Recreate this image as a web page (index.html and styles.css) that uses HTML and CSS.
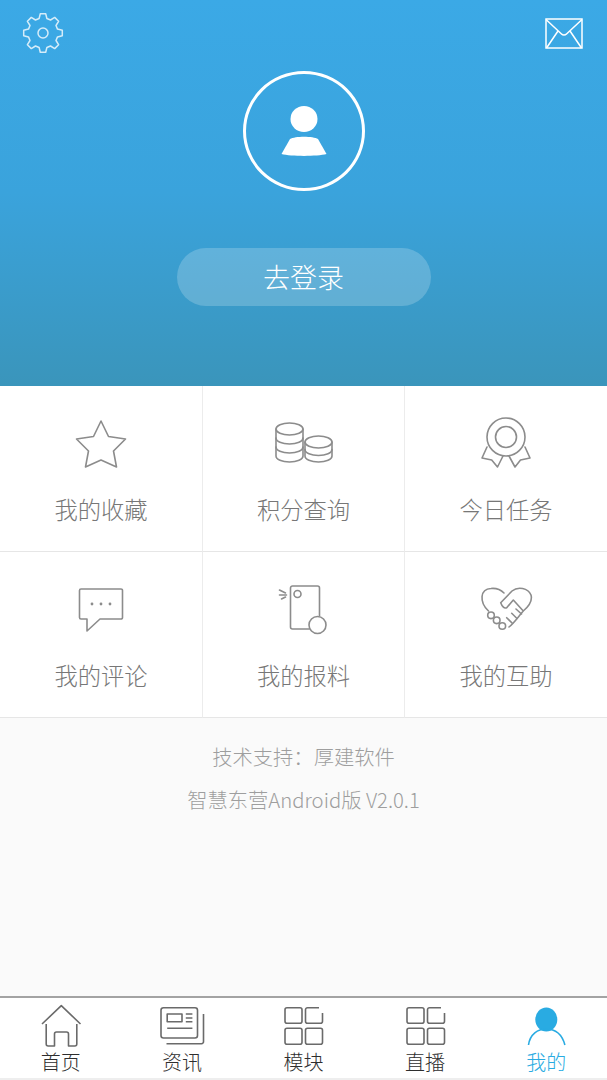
FILE: index.html
```html
<!DOCTYPE html>
<html lang="zh-CN">
<head>
  <meta charset="UTF-8">
  <meta name="viewport" content="width=device-width, initial-scale=1.0">
  <title>智慧东营</title>
  <link rel="stylesheet" href="styles.css">
</head>
<body>
  <div class="page">
    <header class="profile">
      <div class="top-bar">
        <svg class="icon-gear" viewBox="0 0 42 42">
          <g transform="translate(21 21)">
            <polygon points="-3.9,-14.5 -2.7,-19.3 2.7,-19.3 3.9,-14.5 7.5,-13 11.7,-15.6 15.6,-11.7 13,-7.5 14.5,-3.9 19.3,-2.7 19.3,2.7 14.5,3.9 13,7.5 15.6,11.7 11.7,15.6 7.5,13 3.9,14.5 2.7,19.3 -2.7,19.3 -3.9,14.5 -7.5,13 -11.7,15.6 -15.6,11.7 -13,7.5 -14.5,3.9 -19.3,2.7 -19.3,-2.7 -14.5,-3.9 -13,-7.5 -15.6,-11.7 -11.7,-15.6 -7.5,-13"/>
            <circle r="5"/>
          </g>
        </svg>
        <svg class="icon-mail" viewBox="0 0 38 31">
          <rect x="1" y="1" width="36" height="29"/>
          <path d="M1 1.500 16.500 16A3.500 3.500 0 0 0 21.500 16L37 1.500M1.500 30 13 13M36.500 30 25 13"/>
        </svg>
      </div>
      <div class="avatar">
        <svg class="icon-avatar" viewBox="0 0 46 50">
          <ellipse cx="23" cy="13" rx="13.500" ry="13"/>
          <path d="M9 33C14 30 32 30 37 33L45.500 48C36 50.500 10 50.500 .5 48Z"/>
        </svg>
      </div>
      <a class="login-btn">去登录</a>
    </header>

    <section class="menu">
      <div class="menu-cell">
        <svg class="menu-icon" viewBox="0 0 60 56">
          <path d="M30 5 37.500 20.500 54.500 23 42.500 35 45.500 51 30 44 14.500 51 17.500 35 5.500 23 22.500 20.500Z"/>
        </svg>
        <span class="menu-label">我的收藏</span>
      </div>
      <div class="menu-cell">
        <svg class="menu-icon" viewBox="0 0 60 56">
          <path d="M2 13V40C2 43.500 8 46 15.500 46S29 43.500 29 40V13"/>
          <path class="line" d="M2 22C2 25.500 8 28 15.500 28S29 25.500 29 22M2 31C2 34.500 8 37 15.500 37S29 34.500 29 31"/>
          <ellipse cx="15.500" cy="13" rx="13.500" ry="6"/>
          <path d="M31 26V40C31 43.500 37 46 44.500 46S58 43.500 58 40V26"/>
          <path class="line" d="M31 33.500C31 37 37 39.500 44.500 39.500S58 37 58 33.500"/>
          <ellipse cx="44.500" cy="26" rx="13.500" ry="6"/>
        </svg>
        <span class="menu-label">积分查询</span>
      </div>
      <div class="menu-cell">
        <svg class="menu-icon" viewBox="0 0 60 56">
          <path d="M11 31 6 42 15.700 44 21.500 51 27 40M33 40 39 51 44.500 44 54 42 49 31"/>
          <circle cx="30" cy="21" r="19"/>
          <circle cx="30" cy="21" r="10.500"/>
        </svg>
        <span class="menu-label">今日任务</span>
      </div>
      <div class="menu-cell">
        <svg class="menu-icon" viewBox="0 0 60 56">
          <path d="M10 7H50A1.500 1.500 0 0 1 51.500 8.500V35.500A1.500 1.500 0 0 1 50 37H29L16 49V37H10A1.500 1.500 0 0 1 8.500 35.500V8.500A1.500 1.500 0 0 1 10 7Z"/>
          <circle class="dot" cx="21" cy="22" r="1.400"/>
          <circle class="dot" cx="30" cy="22" r="1.400"/>
          <circle class="dot" cx="39" cy="22" r="1.400"/>
        </svg>
        <span class="menu-label">我的评论</span>
      </div>
      <div class="menu-cell">
        <svg class="menu-icon" viewBox="0 0 60 56">
          <path d="M45.500 34V6A2 2 0 0 0 43.500 4H18.500A2 2 0 0 0 16.500 6V45A2 2 0 0 0 18.500 47H35"/>
          <circle cx="43.500" cy="43" r="8.500"/>
          <circle cx="23.500" cy="12" r="3.500"/>
          <path d="M5.500 8 11.500 11M5.500 13H12.500M7.500 17 11.500 15"/>
        </svg>
        <span class="menu-label">我的报料</span>
      </div>
      <div class="menu-cell">
        <svg class="menu-icon" viewBox="0 0 60 56">
          <path class="line" d="M12.500 29C3 20 4 7 15 6.500 20 6 25 8 28 11"/>
          <path class="line" d="M47.300 29 37.300 18 30.700 25.700C28 27 26 24 24.700 20.700L36 9C42 4 52 6 55 13 57 20 52 25 47.300 29 42 35 38 41 33 45"/>
          <circle cx="15" cy="33.300" r="3.300"/>
          <circle cx="20.700" cy="38.300" r="3.300"/>
          <circle cx="26.300" cy="44" r="3.300"/>
          <path class="line" d="M30.700 35.700 36.300 41.300M35.700 31.300 41 36.500M40 27 45.500 32"/>
        </svg>
        <span class="menu-label">我的互助</span>
      </div>
    </section>

    <section class="about">
      <p>技术支持：厚建软件</p>
      <p>智慧东营Android版 V2.0.1</p>
    </section>

    <nav class="tabs">
      <a class="tab">
        <svg class="tab-icon" viewBox="0 0 44 44">
          <path d="M3 20 22.300 1.700 41.500 20M7.200 20V40A2 2 0 0 0 9.200 42H15.500V30A2 2 0 0 1 17.500 28H27.500A2 2 0 0 1 29.500 30V42H35.800A2 2 0 0 0 37.800 40V20"/>
        </svg>
        <span>首页</span>
      </a>
      <a class="tab">
        <svg class="tab-icon" viewBox="0 0 44 44">
          <rect x="1" y="3.700" width="36.500" height="30.300" rx="2.500"/>
          <path d="M43.500 10V37.500A2 2 0 0 1 41.500 39.700H6.500"/>
          <rect x="7.200" y="10" width="14.800" height="7.700"/>
          <path d="M25.800 10H32.400M25.800 14H32.400M25.800 17.700H32.400M7.200 24.300H32.400"/>
        </svg>
        <span>资讯</span>
      </a>
      <a class="tab">
        <svg class="tab-icon" viewBox="0 0 44 44">
          <rect x="4" y="3.700" width="17" height="15.600" rx="2"/>
          <path d="M38 3.700H26.500A2 2 0 0 0 24.500 5.700V17.300A2 2 0 0 0 26.500 19.300H39.500A2 2 0 0 0 41.500 17.300V9"/>
          <rect x="4" y="24.300" width="17" height="16" rx="2"/>
          <rect x="24.500" y="24.300" width="17" height="16" rx="2"/>
        </svg>
        <span>模块</span>
      </a>
      <a class="tab">
        <svg class="tab-icon" viewBox="0 0 44 44">
          <rect x="4" y="3.700" width="17" height="15.600" rx="2"/>
          <path d="M38 3.700H26.500A2 2 0 0 0 24.500 5.700V17.300A2 2 0 0 0 26.500 19.300H39.500A2 2 0 0 0 41.500 17.300V9"/>
          <rect x="4" y="24.300" width="17" height="16" rx="2"/>
          <rect x="24.500" y="24.300" width="17" height="16" rx="2"/>
        </svg>
        <span>直播</span>
      </a>
      <a class="tab active">
        <svg class="tab-icon" viewBox="0 0 44 44">
          <ellipse class="solid" cx="22.300" cy="15.500" rx="11" ry="12"/>
          <path d="M4.500 41C6 30 14 25 22 25 31 25 38 30 40.900 41"/>
        </svg>
        <span>我的</span>
      </a>
    </nav>
  </div>
</body>
</html>
```

FILE: styles.css
```css
* {
  box-sizing: border-box;
}
body {
  margin: 0;
  font-family: "Noto Sans CJK SC", "Liberation Sans", sans-serif;
  background-color: #fafafa;
}
.page {
  display: flex;
  flex-direction: column;
  height: 1080px;
  overflow: hidden;
}

/* blue header */
.profile {
  display: flex;
  flex-direction: column;
  align-items: center;
  height: 386px;
  padding-top: 12px;
  background: linear-gradient(#3ba9e6 0%, #3aa3dc 50%, #3a95bb 100%);
}
.top-bar {
  display: flex;
  justify-content: space-between;
  align-items: center;
  width: 100%;
  height: 42px;
  padding: 0 24px 0 22px;
}
.icon-gear {
  width: 42px;
  height: 42px;
  fill: none;
  stroke: #d5ecf9;
  stroke-width: 1.5;
  stroke-linejoin: round;
}
.icon-mail {
  width: 38px;
  height: 31px;
  fill: none;
  stroke: #fff;
  stroke-width: 1.5;
}
.avatar {
  display: flex;
  justify-content: center;
  align-items: center;
  width: 122px;
  height: 120px;
  margin-top: 17px;
  border: 3px solid #fff;
  border-radius: 50%;
}
.icon-avatar {
  width: 46px;
  height: 50px;
  fill: #fff;
}
.login-btn {
  width: 254px;
  height: 58px;
  margin-top: 57px;
  border-radius: 29px;
  background-color: rgba(255, 255, 255, 0.2);
  font-size: 27px;
  font-weight: 300;
  line-height: 57px;
  text-align: center;
  color: #fff;
}

/* 2x3 menu */
.menu {
  display: grid;
  grid-template-columns: 203px 202px 202px;
  background-color: #fff;
}
.menu-cell {
  display: flex;
  flex-direction: column;
  align-items: center;
  height: 166px;
  padding-top: 30px;
  border-right: 1px solid #ececec;
  border-bottom: 1px solid #e6e6e6;
}
.menu-cell:nth-child(3n) {
  border-right: none;
}
.menu-icon {
  width: 60px;
  height: 56px;
  fill: #fff;
  stroke: #8c8c8c;
  stroke-width: 1.6;
  stroke-linejoin: round;
  stroke-linecap: round;
}
.menu-icon .line {
  fill: none;
}
.menu-icon .dot {
  fill: #8c8c8c;
  stroke: none;
}
.menu-label {
  margin-top: 22px;
  font-size: 23.3px;
  font-weight: 300;
  line-height: 30px;
  color: #777;
}

/* version text */
.about {
  flex: 1;
  padding-top: 23px;
  text-align: center;
  font-size: 20.3px;
  font-weight: 300;
  line-height: 30px;
  color: #9e9e9e;
}
.about p {
  margin: 0 0 13px;
}

/* bottom tabs */
.tabs {
  display: grid;
  grid-template-columns: repeat(5, 1fr);
  height: 84px;
  padding-top: 6px;
  border-top: 2px solid #a3a3a3;
  border-bottom: 2px solid #eeeeee;
  background-color: #fff;
}
.tab {
  display: flex;
  flex-direction: column;
  align-items: center;
  font-size: 20px;
  font-weight: 300;
  line-height: 24px;
  color: #2e2e2e;
}
.tab span {
  margin-top: 2px;
}
.tab-icon {
  width: 44px;
  height: 44px;
  fill: none;
  stroke: #6a6a6a;
  stroke-width: 1.6;
  stroke-linejoin: round;
  overflow: visible;
}
.tab.active {
  color: #29abe2;
}
.tab.active .tab-icon {
  stroke: #29abe2;
}
.tab.active .solid {
  fill: #29abe2;
  stroke: none;
}
```
